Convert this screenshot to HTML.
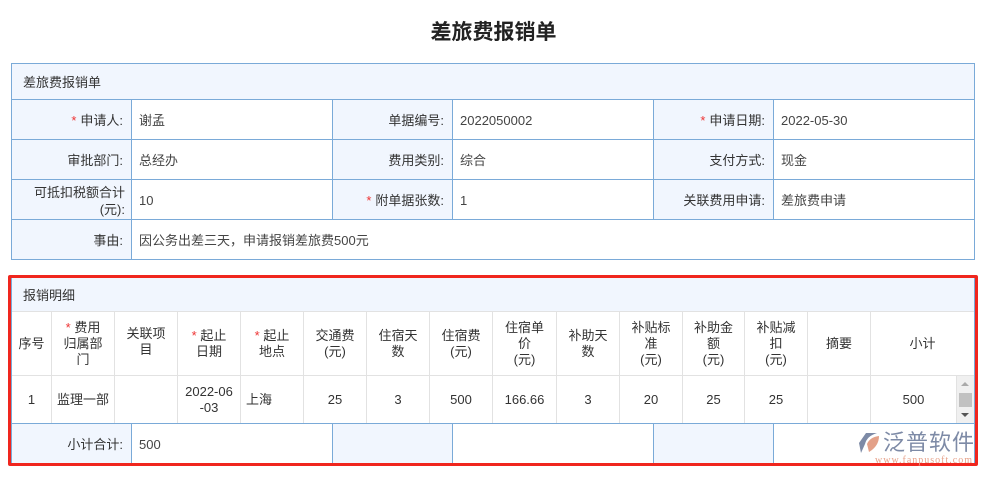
<!DOCTYPE html>
<html><head><meta charset="utf-8"><style>
*{margin:0;padding:0;box-sizing:border-box}
body{width:987px;height:479px;background:#fff;font-family:"Liberation Sans","Noto Sans CJK SC",sans-serif;font-size:13px;color:#333;position:relative;overflow:hidden}
.a{position:absolute}
.t{left:0;width:987px;top:19px;text-align:center;font-size:21px;font-weight:bold;color:#222;line-height:28px}
.c{position:absolute;border:1px solid #7aaad8;display:flex;align-items:center;line-height:17px;padding-top:2px}
.l{background:#f1f6fe;justify-content:flex-end;padding-right:8px;text-align:right}
.v{background:#fff;padding-left:7px;color:#444}
.h{background:#f1f6fe;padding-left:11px;color:#333}
.s{color:#e33;margin-right:4px}
.d{position:absolute;border-right:1px solid #e2e2e2;border-bottom:1px solid #e2e2e2;display:flex;align-items:center;justify-content:center;text-align:center;line-height:16px;color:#333;padding-top:2px}
</style></head><body>
<div class="a t">差旅费报销单</div>

<div class="c h" style="left:11px;top:63px;width:964px;height:37px">差旅费报销单</div>
<div class="c l" style="left:11px;top:99px;width:121px;height:41px"><span class="s">*</span>申请人:</div>
<div class="c v" style="left:131px;top:99px;width:202px;height:41px">谢孟</div>
<div class="c l" style="left:332px;top:99px;width:121px;height:41px">单据编号:</div>
<div class="c v" style="left:452px;top:99px;width:202px;height:41px">2022050002</div>
<div class="c l" style="left:653px;top:99px;width:121px;height:41px"><span class="s">*</span>申请日期:</div>
<div class="c v" style="left:773px;top:99px;width:202px;height:41px">2022-05-30</div>

<div class="c l" style="left:11px;top:139px;width:121px;height:41px">审批部门:</div>
<div class="c v" style="left:131px;top:139px;width:202px;height:41px">总经办</div>
<div class="c l" style="left:332px;top:139px;width:121px;height:41px">费用类别:</div>
<div class="c v" style="left:452px;top:139px;width:202px;height:41px">综合</div>
<div class="c l" style="left:653px;top:139px;width:121px;height:41px">支付方式:</div>
<div class="c v" style="left:773px;top:139px;width:202px;height:41px">现金</div>

<div class="c l" style="left:11px;top:179px;width:121px;height:41px;padding-right:6px">可抵扣税额合计<br>(元):</div>
<div class="c v" style="left:131px;top:179px;width:202px;height:41px">10</div>
<div class="c l" style="left:332px;top:179px;width:121px;height:41px"><span class="s">*</span>附单据张数:</div>
<div class="c v" style="left:452px;top:179px;width:202px;height:41px">1</div>
<div class="c l" style="left:653px;top:179px;width:121px;height:41px">关联费用申请:</div>
<div class="c v" style="left:773px;top:179px;width:202px;height:41px">差旅费申请</div>

<div class="c l" style="left:11px;top:219px;width:121px;height:41px">事由:</div>
<div class="c v" style="left:131px;top:219px;width:844px;height:41px">因公务出差三天，申请报销差旅费500元</div>

<div class="c h" style="left:11px;top:276px;width:964px;height:36px;border-bottom-color:#e2e2e2">报销明细</div>
<div style="position:absolute;left:11px;top:311px;width:964px;height:113px;border-left:1px solid #7aaad8;border-right:1px solid #7aaad8"></div>
<div class="d" style="left:12px;top:311px;width:40px;height:65px">序号</div>
<div class="d" style="left:52px;top:311px;width:63px;height:65px"><span><span class="s" style="margin:0">*</span> 费用<br>归属部<br>门</span></div>
<div class="d" style="left:115px;top:311px;width:63px;height:65px;align-items:flex-start;padding-top:15px">关联项<br>目</div>
<div class="d" style="left:178px;top:311px;width:63px;height:65px"><span><span class="s" style="margin:0">*</span> 起止<br>日期</span></div>
<div class="d" style="left:241px;top:311px;width:63px;height:65px"><span><span class="s" style="margin:0">*</span> 起止<br>地点</span></div>
<div class="d" style="left:304px;top:311px;width:63px;height:65px">交通费<br>(元)</div>
<div class="d" style="left:367px;top:311px;width:63px;height:65px">住宿天<br>数</div>
<div class="d" style="left:430px;top:311px;width:63px;height:65px">住宿费<br>(元)</div>
<div class="d" style="left:493px;top:311px;width:64px;height:65px">住宿单<br>价<br>(元)</div>
<div class="d" style="left:557px;top:311px;width:63px;height:65px">补助天<br>数</div>
<div class="d" style="left:620px;top:311px;width:63px;height:65px">补贴标<br>准<br>(元)</div>
<div class="d" style="left:683px;top:311px;width:62px;height:65px">补助金<br>额<br>(元)</div>
<div class="d" style="left:745px;top:311px;width:63px;height:65px">补贴减<br>扣<br>(元)</div>
<div class="d" style="left:808px;top:311px;width:63px;height:65px">摘要</div>
<div class="d" style="left:871px;top:311px;width:103px;height:65px;border-right:none">小计</div>

<div class="d" style="left:12px;top:375px;width:40px;height:49px">1</div>
<div class="d" style="left:52px;top:375px;width:63px;height:49px">监理一部</div>
<div class="d" style="left:115px;top:375px;width:63px;height:49px"></div>
<div class="d" style="left:178px;top:375px;width:63px;height:49px">2022-06<br>-03</div>
<div class="d" style="left:241px;top:375px;width:63px;height:49px;justify-content:flex-start;padding-left:5px">上海</div>
<div class="d" style="left:304px;top:375px;width:63px;height:49px">25</div>
<div class="d" style="left:367px;top:375px;width:63px;height:49px">3</div>
<div class="d" style="left:430px;top:375px;width:63px;height:49px">500</div>
<div class="d" style="left:493px;top:375px;width:64px;height:49px">166.66</div>
<div class="d" style="left:557px;top:375px;width:63px;height:49px">3</div>
<div class="d" style="left:620px;top:375px;width:63px;height:49px">20</div>
<div class="d" style="left:683px;top:375px;width:62px;height:49px">25</div>
<div class="d" style="left:745px;top:375px;width:63px;height:49px">25</div>
<div class="d" style="left:808px;top:375px;width:63px;height:49px"></div>
<div class="d" style="left:871px;top:375px;width:86px;height:49px">500</div>
<div class="a" style="left:957px;top:376px;width:17px;height:47px;background:#f0f0f0">
 <div class="a" style="left:4px;top:6px;border-left:4px solid transparent;border-right:4px solid transparent;border-bottom:4px solid #aaa"></div>
 <div class="a" style="left:2px;top:17px;width:13px;height:14px;background:#c1c1c1"></div>
 <div class="a" style="left:4px;top:37px;border-left:4px solid transparent;border-right:4px solid transparent;border-top:4px solid #555"></div>
</div>

<div class="c l" style="left:11px;top:423px;width:121px;height:41px">小计合计:</div>
<div class="c v" style="left:131px;top:423px;width:202px;height:41px">500</div>
<div class="c l" style="left:332px;top:423px;width:121px;height:41px"></div>
<div class="c v" style="left:452px;top:423px;width:202px;height:41px"></div>
<div class="c l" style="left:653px;top:423px;width:121px;height:41px"></div>
<div class="c v" style="left:773px;top:423px;width:202px;height:41px"></div>

<div class="a" style="left:8px;top:275px;width:970px;height:191px;border:3px solid #f0261e;border-radius:2px"></div>

<div class="a" style="left:857px;top:432px;width:24px;height:22px">
<svg width="24" height="22" viewBox="0 0 24 22"><path d="M2 11 L9 1 L20 1 Q10 4 8 12 L4 21 Z" fill="#7d8aa6"/><path d="M10 12 Q13 5 22 4 Q22 14 12 20 Z" fill="#e3a088"/></svg>
</div>
<div class="a" style="left:883px;top:430px;font-size:22px;color:#7d8aa6;line-height:26px;letter-spacing:1px">泛普软件</div>
<div class="a" style="left:875px;top:456px;font-size:10px;color:#e7a28a;line-height:10px;font-family:'Liberation Serif',serif;letter-spacing:1px">www.fanpusoft.com</div>
</body></html>
